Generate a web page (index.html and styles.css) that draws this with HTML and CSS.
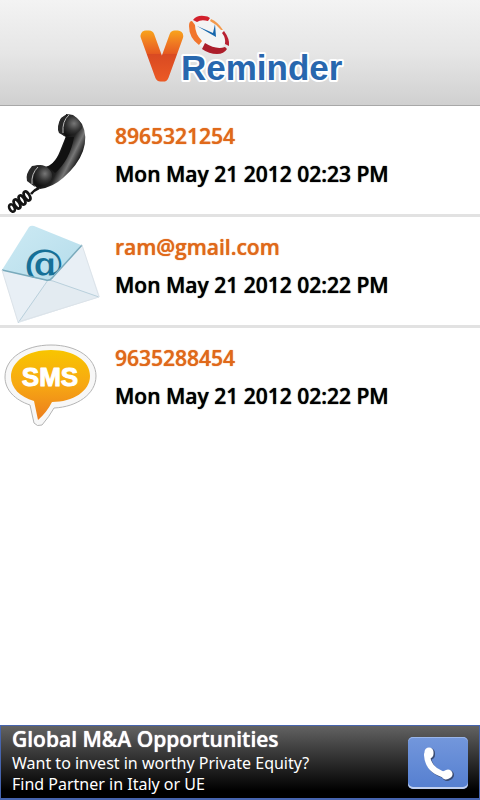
FILE: index.html
```html
<!DOCTYPE html>
<html lang="en">
<head>
<meta charset="utf-8">
<meta name="viewport" content="width=device-width, initial-scale=1">
<title>VReminder</title>
<link rel="stylesheet" href="styles.css">
</head>
<body>
<header class="topbar">
  <svg class="logo" viewBox="130 6 220 90" role="img" aria-label="VReminder">
    <defs>
      <linearGradient id="vfill" gradientUnits="userSpaceOnUse" x1="0" y1="31" x2="0" y2="82">
        <stop offset="0" stop-color="#f8a21c"/>
        <stop offset=".25" stop-color="#ef7722"/>
        <stop offset=".44" stop-color="#e65b20"/>
        <stop offset=".46" stop-color="#d94a22"/>
        <stop offset="1" stop-color="#ec5a25"/>
      </linearGradient>
    </defs>
    <text class="logo-v" x="146" y="76">V</text>
    <text class="logo-word logo-halo" x="181" y="80">Reminder</text>
    <text class="logo-word" x="181" y="80">Reminder</text>
    <ellipse cx="209" cy="35" rx="18" ry="14" transform="rotate(44 209 35)" fill="#f4f4f4"/>
    <path d="M193 20Q197 15 204 16Q208 16 210 18L208 21Q201 19 197 22Z" fill="#d2202c"/>
    <path d="M211 19Q218 22 223 30L221 30Q216 24 210 21Z" fill="#f39a4d"/>
    <path d="M224 31Q230 39 229 46L225 44Q226 38 222 33Z" fill="#b82031"/>
    <path d="M192 21Q189 21 189 26Q189 38 199 45L202 41Q195 34 195 25Z" fill="#f1752d"/>
    <path d="M205 43Q216 50 225 47L227 49Q224 54 217 54Q209 54 202 49Z" fill="#ac1e2b"/>
    <path d="M197 26L213 33L215 24L216 37Z" fill="#1767ac"/>
  </svg>
</header>

<main class="content">
  <ul class="reminders">
    <li class="reminder">
      <svg class="picture" viewBox="0 0 110 108" aria-hidden="true">
        <defs>
          <linearGradient id="handle" gradientUnits="userSpaceOnUse" x1="55" y1="42" x2="79" y2="54">
            <stop offset="0" stop-color="#111"/>
            <stop offset=".45" stop-color="#222"/>
            <stop offset=".72" stop-color="#777"/>
            <stop offset="1" stop-color="#151515"/>
          </linearGradient>
          <radialGradient id="cup" cx=".65" cy=".4" r=".6">
            <stop offset="0" stop-color="#777"/>
            <stop offset=".55" stop-color="#333"/>
            <stop offset="1" stop-color="#111"/>
          </radialGradient>
        </defs>
        <g fill="none" stroke="#151515" stroke-width="2.6">
          <path d="M39 82Q34 84 31 88"/>
          <ellipse cx="27" cy="90" rx="2.5" ry="5" transform="rotate(-30 27 90)"/>
          <ellipse cx="22" cy="94" rx="2.5" ry="5" transform="rotate(-30 22 94)"/>
          <ellipse cx="17" cy="98" rx="2.5" ry="5" transform="rotate(-30 17 98)"/>
          <ellipse cx="12" cy="102" rx="2.5" ry="4" transform="rotate(-30 12 102)"/>
        </g>
        <path d="M66 8Q76 9 82 18Q88 30 83 45Q78 59 63 72Q53 81 40 83Q32 81 33 72L44 61Q54 60 60 45L66 30Z" fill="url(#handle)"/>
        <path d="M66 31Q62 51 49 61L55 67Q70 54 74 31Z" fill="#111"/>
        <path d="M60 14Q66 7 73 9Q81 14 82 22Q78 28 66 31Q57 27 60 14Z" fill="url(#cup)"/>
        <path d="M67 8L61 12Q56 21 59 27L66 31Q60 25 65 13Z" fill="#282828"/>
        <path d="M69 9Q62 15 63 27" fill="none" stroke="#bbb"/>
        <path d="M35 60Q43 57 49 63Q54 68 51 74Q44 83 35 80Q28 75 35 60Z" fill="url(#cup)"/>
        <path d="M39 59L32 60Q25 68 27 75L35 81Q31 73 36 65Z" fill="#292929"/>
        <path d="M38 61Q31 68 32 78" fill="none" stroke="#bbb"/>
      </svg>
      <div class="details">
        <a class="contact" href="tel:8965321254">8965321254</a>
        <time class="when" datetime="2012-05-21T14:23">Mon May 21 2012 02:23 PM</time>
      </div>
    </li>
    <li class="reminder">
      <svg class="picture" viewBox="0 0 110 108" aria-hidden="true">
        <defs>
          <linearGradient id="flap" x1="0" y1="0" x2="1" y2="1">
            <stop offset="0" stop-color="#cdeaf4"/>
            <stop offset="1" stop-color="#b4dcea"/>
          </linearGradient>
        </defs>
        <path d="M2 53L29 10Q31 8 34 9L81 28L50 66Z" fill="url(#flap)"/>
        <text class="at-sign" x="24" y="60">@</text>
        <path d="M2 53L48 64L82 28L100 80L18 106Z" fill="#e8eff5"/>
        <path d="M18 106L48 63L53 64L99 80" fill="#e3ebf1" stroke="#b9d0dc"/>
        <path d="M2 53L46 63Q50 64 53 60L82 28" fill="none" stroke="#79aabc" stroke-width="1.5"/>
        <path d="M82 28L99 80L18 105L2 53" fill="none" stroke="#dce3e9"/>
      </svg>
      <div class="details">
        <a class="contact" href="mailto:ram@gmail.com">ram@gmail.com</a>
        <time class="when" datetime="2012-05-21T14:22">Mon May 21 2012 02:22 PM</time>
      </div>
    </li>
    <li class="reminder">
      <svg class="picture" viewBox="0 0 110 108" aria-hidden="true">
        <defs>
          <linearGradient id="bubble" x1="0" y1="0" x2="0" y2="1">
            <stop offset="0" stop-color="#f8c500"/>
            <stop offset=".5" stop-color="#f7a813"/>
            <stop offset="1" stop-color="#ec7d1d"/>
          </linearGradient>
        </defs>
        <path d="M51 17C77 17 96 30 96 48C96 66 77 79 54 80Q49 89 42 97Q37 99 34 95L30 77C15 72 5 62 5 49C5 30 25 17 51 17Z" fill="#f7f7f7" stroke="#b5b5b5"/>
        <path d="M51 22C74 22 90 33 90 48C90 63 73 74 52 74Q47 84 38 92L34 73C20 69 11 60 11 49C11 33 28 22 51 22Z" fill="url(#bubble)"/>
        <text class="sms" x="50" y="58">SMS</text>
      </svg>
      <div class="details">
        <a class="contact" href="sms:9635288454">9635288454</a>
        <time class="when" datetime="2012-05-21T14:22">Mon May 21 2012 02:22 PM</time>
      </div>
    </li>
  </ul>
</main>

<footer class="ad">
  <div class="ad-copy">
    <strong class="ad-title">Global M&amp;A Opportunities</strong>
    <p class="ad-text">Want to invest in worthy Private Equity?<br>Find Partner in Italy or UE</p>
  </div>
  <button class="call" type="button" aria-label="Call">
    <svg class="call-icon" viewBox="0 0 60 52" aria-hidden="true">
      <g fill="none" stroke="#3a4c74" stroke-linecap="round" transform="translate(1 1)">
        <path d="M19 18Q20 34 38 38" stroke-width="6"/>
        <path d="M21 15L21 17M38 38L40 37" stroke-width="10"/>
      </g>
      <g fill="none" stroke="#fff" stroke-linecap="round">
        <path d="M19 18Q20 34 38 38" stroke-width="6"/>
        <path d="M21 15L21 17M38 38L40 37" stroke-width="9"/>
      </g>
    </svg>
  </button>
</footer>
</body>
</html>
```
FILE: styles.css
```css
* {
  box-sizing: border-box;
}

body {
  margin: 0;
  min-height: 100vh;
  display: flex;
  flex-direction: column;
  background: #fff;
  color: #000;
  font-family: "Open Sans", "Noto Sans", sans-serif;
}

.topbar {
  display: flex;
  justify-content: center;
  padding: 6px 0 9px;
  background: linear-gradient(#f3f3f3, #e6e6e6 50%, #d0d0d0);
  border-bottom: 1px solid #a8a8a8;
}

.logo {
  display: block;
  width: 220px;
  height: 90px;
}

.logo-v {
  font: 300 55px "Open Sans", sans-serif;
  fill: url(#vfill);
  stroke: url(#vfill);
  stroke-width: 11px;
  stroke-linejoin: round;
}

.logo-word {
  font: 700 35px "Liberation Sans", Arial, sans-serif;
  fill: #2867ae;
}

.logo-halo {
  fill: #fff;
  stroke: #fff;
  stroke-width: 4px;
  stroke-linejoin: round;
}

.content {
  flex: 1;
}

.reminders {
  margin: 0;
  padding: 0;
  list-style: none;
}

.reminder {
  display: flex;
  border-bottom: 3px solid #e2e2e2;
}

.reminder:last-child {
  border-bottom: 0;
}

.picture {
  display: block;
  flex: none;
  width: 110px;
  height: 108px;
}

.at-sign {
  font: 700 40px "DejaVu Serif", serif;
  fill: #167097;
}

.sms {
  font: 700 26px "Liberation Sans", Arial, sans-serif;
  fill: #fff;
  stroke: #fff;
  stroke-width: 1px;
  stroke-linejoin: round;
  text-anchor: middle;
}

.details {
  display: flex;
  flex-direction: column;
  padding: 11px 0 0 5px;
  font-size: 21px;
  font-weight: 600;
  line-height: 38px;
}

.contact,
.when,
.ad-title {
  text-shadow: 0 0 1px currentColor;
}

.contact {
  color: #e0691a;
  text-decoration: none;
}

.ad {
  display: flex;
  justify-content: space-between;
  align-items: center;
  padding: 0 11px;
  border: 1px solid #4664ae;
  border-bottom-width: 2px;
  background: linear-gradient(#626262, #2b2b2b 50%, #000 90%);
  color: #fff;
}

.ad-copy {
  padding-bottom: 3px;
}

.ad-title {
  display: block;
  font-size: 21px;
  font-weight: 600;
  line-height: 26px;
}

.ad-text {
  margin: 1px 0 0;
  font-family: "Noto Sans", sans-serif;
  font-size: 16px;
  line-height: 21px;
}

.call {
  flex: none;
  width: 60px;
  height: 52px;
  margin-top: 2px;
  padding: 0;
  border: 0;
  border-radius: 5px;
  background: linear-gradient(#7397dc, #557fd0);
  box-shadow: inset 0 1px #9ab6ea, inset 0 -2px #c0d0f0;
}

.call-icon {
  display: block;
  width: 60px;
  height: 52px;
}
```
